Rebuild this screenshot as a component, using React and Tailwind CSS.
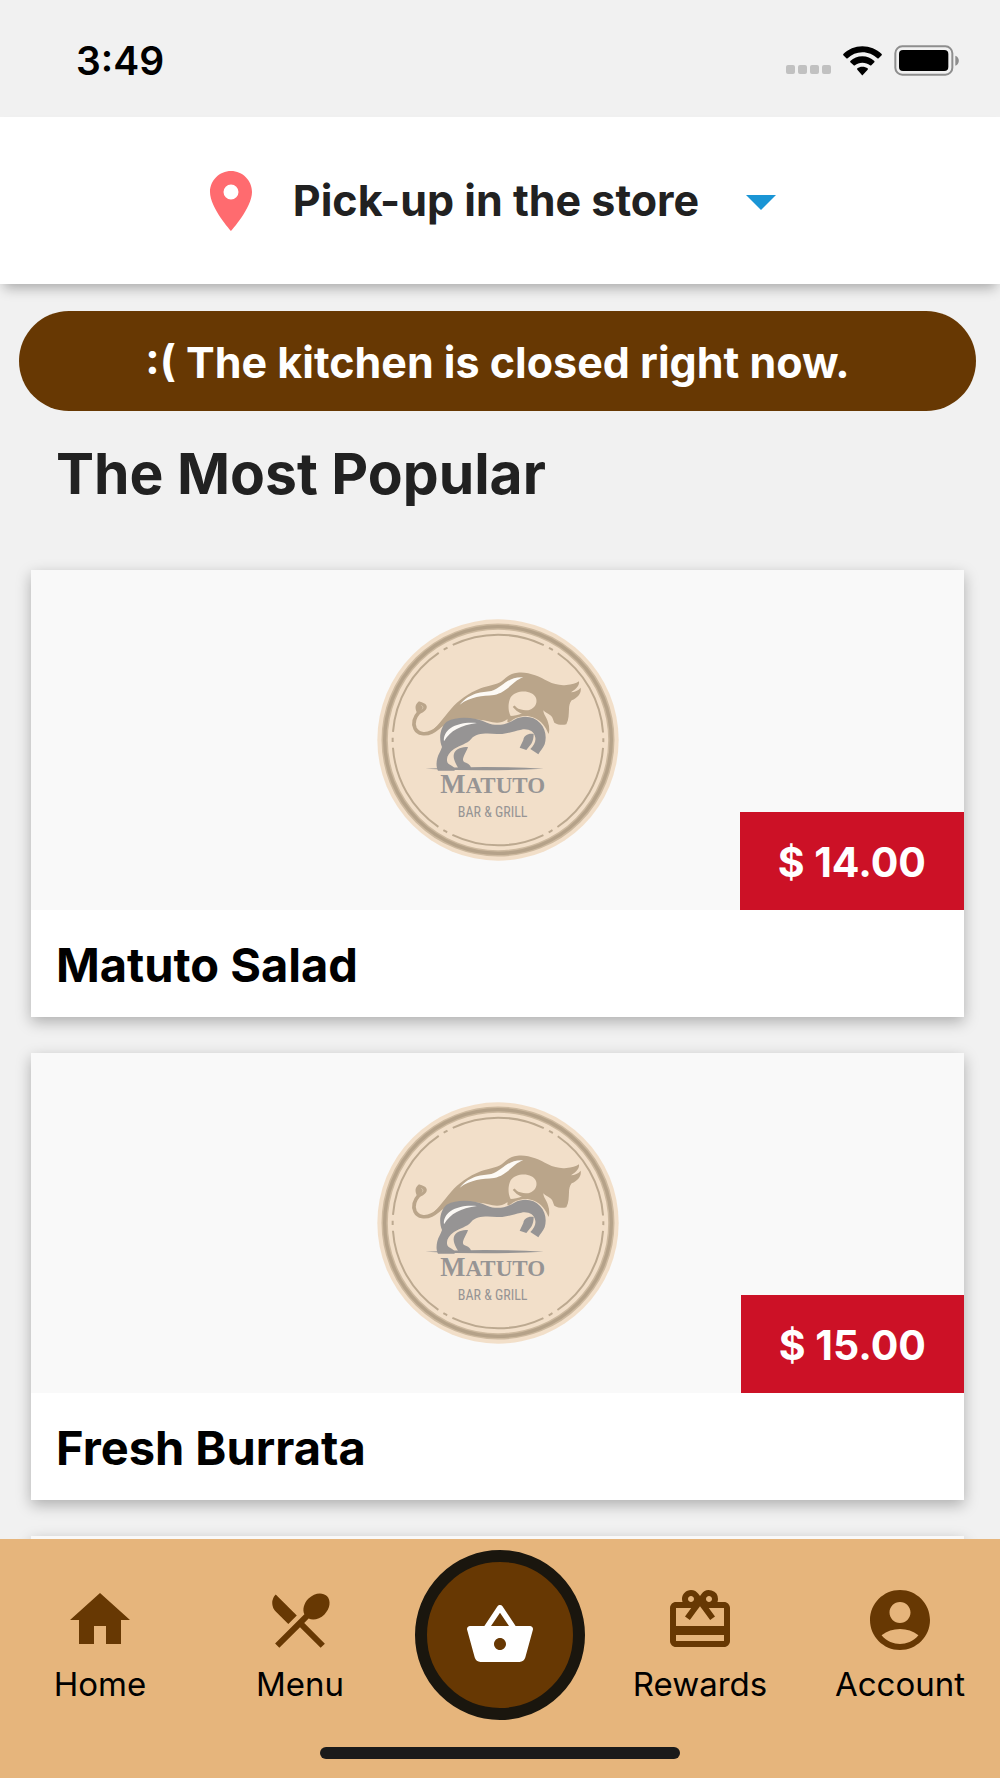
import React, { useState } from "react";
import {
  MdAccountCircle,
  MdArrowDropDown,
  MdHome,
  MdLocationOn,
  MdRedeem,
  MdRestaurantMenu,
  MdShoppingBasket,
} from "react-icons/md";

const products = [
  { id: 1, name: "Matuto Salad", price: "$ 14.00" },
  { id: 2, name: "Fresh Burrata", price: "$ 15.00" },
];

function StatusBar() {
  return (
    <div className="flex h-[117px] shrink-0 items-center justify-between pt-1 pr-10 pl-[76px]">
      <span className="text-[39px] leading-none font-semibold text-black">3:49</span>
      <div className="flex items-center">
        <div className="mt-[18px] mr-3 flex gap-[3px]">
          <span className="h-[9px] w-[9px] rounded-[2px] bg-[#c1c1c1]" />
          <span className="h-[9px] w-[9px] rounded-[2px] bg-[#c1c1c1]" />
          <span className="h-[9px] w-[9px] rounded-[2px] bg-[#c1c1c1]" />
          <span className="h-[9px] w-[9px] rounded-[2px] bg-[#c1c1c1]" />
        </div>
        <svg className="mr-3 h-[30px] w-[39px]" viewBox="0 0 117 90" aria-hidden="true">
          <path d="M58 1C36 1 16 10 1 24c-1 1-1 3 0 4l9 9c1 1 3 1 4 0 12-11 27-18 44-18s33 7 45 18c1 1 3 1 4 0l9-9c1-1 1-3 0-4C101 10 80 1 58 1z" />
          <path d="M58 31c-14 0-26 5-36 14-1 1-1 3 0 4l10 9c1 1 3 1 4 0 6-5 13-8 22-8s17 3 23 8c1 1 3 1 4 0l9-9c1-1 1-3 0-4-10-9-22-14-36-14z" />
          <path d="M58 62c-6 0-11 2-15 5-1 1-1 3 0 4l13 15c1 2 3 2 4 0l14-15c1-1 1-3 0-4-4-3-10-5-16-5z" />
        </svg>
        <svg className="h-[31px] w-[66px]" viewBox="0 0 198 93" aria-hidden="true">
          <rect x="4" y="4" width="171" height="85" rx="21" fill="none" stroke="#8e8e8e" strokeWidth="6" />
          <rect x="15" y="15" width="148" height="63" rx="12" />
          <path d="M184 32c14 4 14 26 0 30z" fill="#8e8e8e" />
        </svg>
      </div>
    </div>
  );
}

function Logo() {
  return (
    <svg className="h-[242px] w-[242px]" viewBox="35 41 726 726" role="img" aria-label="Matuto Bar & Grill">
      <circle cx="398" cy="404" r="362" fill="#f2dfc9" />
      <circle cx="398" cy="404" r="340" fill="none" stroke="#cdb99f" strokeWidth="19" />
      <circle cx="398" cy="404" r="340" fill="none" stroke="#b5a289" strokeWidth="10" />
      <circle
        cx="398"
        cy="404"
        r="316"
        fill="none"
        stroke="#bca990"
        strokeWidth="6"
        pathLength="360"
        strokeDasharray="1.2 3.2 51.2 3.2 1.2 0"
      />

      {/* tail */}
      <path
        d="M163 318C148 335 141 352 149 369c9 18 31 20 50 11 15-7 27-18 40-34"
        fill="none"
        stroke="#baa58a"
        strokeWidth="11"
      />
      <path d="M155 322c-7-14-6-25 6-34 8 4 20 5 23 14 2 11-7 18-22 24z" fill="#baa58a" />
      <path d="M168 300c6 3 6 8 2 12" fill="none" stroke="#d8c5ac" strokeWidth="3" />

      {/* body */}
      <path
        d="M190 383c26-16 42-44 67-72 22-25 52-48 89-62 25-9 47-10 63-21 15-11 22-24 47-26 33-4 65 11 92 26 17 9 36 13 55 11 16-1 29-4 38-11 2 12-8 23-24 33 11-1 22-5 29-14 3 16-8 29-27 38-6 8-8 17-8 27-1 15 0 30-8 45-12 3-24 2-36-5-4-8-4-15-10-21-10-7-19-11-23-16 0 13 11 22 14 36 4 12 5 23 2 35-9-22-22-41-44-49-20-8-43-6-64 6-6 5-10 8-16 8l2-28c2-18 3-40 16-56 16-20 58-20 68 7 6 17-3 31-20 41-20 1-36-6-49-18 4 14 23 26 45 28-16 4-31 4-44 0-12 12-18 19-34 25-25 7-44-6-70-7-48-3-99 11-138 35-5 3-8 5-12 5z"
        fill="#baa58a"
      />
      <path
        d="M436 276c16-24 66-24 76 2 6 19-7 33-23 37-22-1-35-5-46-13 7 11 19 19 28 22-13 6-24 8-35 8-8-13-9-39 0-56z"
        fill="#f2dfc9"
      />
      <path d="M445 303c12 15 29 24 54 26" fill="none" stroke="#baa58a" strokeWidth="7" />
      <path
        d="M283 298C316 260 350 261 378 257C412 247 425 213 474 216C442 226 427 261 386 269C350 273 318 272 283 298z"
        fill="#fdfaf5"
      />

      {/* legs */}
      <path
        d="M244 349c35-18 84-13 121 3 31 13 58 5 82-9 29-15 58-10 77 10 18 19 20 44 14 64-5 12-13 20-19 30l-24-16c10-11 17-21 15-34-3-20-22-28-42-24-29 6-46 15-73 13-33-3-62-3-77 14-14 17-34 18-52 31-17 13-24 24-20 40 4 8 14 9 21 16l1 9h-50c-6-12-5-25-2-37 3-13 10-21 14-34-10-25-7-57 14-76z"
        fill="#969494"
      />
      <path
        d="M308 425c-19 0-34 5-41 17-6 14 2 30 12 47h38c-1-10-9-15-19-18-8-4-5-13-1-22 4-8 8-15 11-24z"
        fill="#969494"
      />
      <path d="M505 386c-16-3-29 4-31 18l-11 23 20 7 15-19c5-8 7-18 7-29z" fill="#969494" />
      <path d="M236 408C232 372 275 347 335 353C286 360 255 375 236 408z" fill="#fbf8f4" />
      <path d="M180 490q90-5 177-5t178 5q-88 5-178 5t-177-5z" fill="#969494" />

      <text
        x="382"
        y="563"
        textAnchor="middle"
        fill="#969494"
        className="font-['Liberation_Serif',serif] text-[80px] font-bold"
      >
        M
        <tspan className="text-[69px]">ATUTO</tspan>
      </text>
      <text
        x="382"
        y="635"
        textAnchor="middle"
        fill="#969494"
        className="font-['Roboto_Condensed','Roboto',sans-serif] text-[42px]"
      >
        BAR &amp; GRILL
      </text>
    </svg>
  );
}

function ProductCard({ product }) {
  return (
    <article className="bg-white shadow-[0_5px_14px_rgba(0,0,0,0.28)]">
      <div className="relative flex h-[340px] items-center justify-center bg-[#f9f9f9]">
        <Logo />
        <span className="absolute right-0 bottom-0 bg-[#cc1126] px-[38px] pt-[26px] pb-6 text-[41px] leading-[48px] font-bold text-white">
          {product.price}
        </span>
      </div>
      <h2 className="px-[25px] pt-[26px] pb-6 text-[47px] leading-[57px] font-bold text-black">
        {product.name}
      </h2>
    </article>
  );
}

function EmptyCard() {
  return <div className="h-[340px] bg-[#f9f9f9] shadow-[0_5px_14px_rgba(0,0,0,0.28)]" />;
}

function NavItem({ icon: Icon, label }) {
  return (
    <a href="#" className="flex flex-1 flex-col items-center pt-[45px]">
      <Icon className="text-7xl text-[#673803]" />
      <span className="mt-1.5 text-[33px] leading-[44px] text-black">{label}</span>
    </a>
  );
}

function BottomNav() {
  return (
    <nav className="shrink-0 bg-[#e6b57c] pb-[19px]">
      <div className="flex h-[208px]">
        <NavItem icon={MdHome} label="Home" />
        <NavItem icon={MdRestaurantMenu} label="Menu" />
        <div className="flex flex-1 justify-center pt-[11px]">
          <button
            aria-label="Basket"
            className="flex h-[170px] w-[170px] items-center justify-center rounded-full border-[12px] border-[#1a160e] bg-[#673803]"
          >
            <MdShoppingBasket className="text-7xl text-white" />
          </button>
        </div>
        <NavItem icon={MdRedeem} label="Rewards" />
        <NavItem icon={MdAccountCircle} label="Account" />
      </div>
      <div className="mx-auto h-3 w-9/25 rounded-full bg-[#1a1a1a]" />
    </nav>
  );
}

function App() {
  const [open, setOpen] = useState(false);

  return (
    <div className="flex h-screen flex-col bg-[#f1f1f1] font-[Inter,sans-serif]">
      <StatusBar />
      <header className="relative flex h-[167px] shrink-0 items-center justify-center bg-white pr-2 shadow-[0_8px_12px_-4px_rgba(0,0,0,0.3)]">
        <button
          aria-expanded={open}
          onClick={() => setOpen(!open)}
          className="flex items-center gap-[26px] text-[43px] font-bold text-[#212121]"
        >
          <MdLocationOn className="text-7xl text-[#ff6b6f]" />
          Pick-up in the store
          <MdArrowDropDown className="text-7xl text-[#1a95d5]" />
        </button>
      </header>

      <main className="min-h-0 flex-1 overflow-y-auto pt-[27px] [scrollbar-width:none]">
        <p className="mr-6 ml-[19px] rounded-full bg-[#673803] pt-[26px] pb-6 text-center text-[43px] leading-[50px] font-bold text-white">
          :( The kitchen is closed right now.
        </p>
        <h1 className="mt-7 px-14 text-[57px] leading-[70px] font-bold text-[#212121]">
          The Most Popular
        </h1>
        <div className="mt-[61px] mr-9 mb-9 ml-[31px] flex flex-col gap-9">
          {products.map((product) => (
            <ProductCard key={product.id} product={product} />
          ))}
          <EmptyCard />
        </div>
      </main>

      <BottomNav />
    </div>
  );
}

export default App;
